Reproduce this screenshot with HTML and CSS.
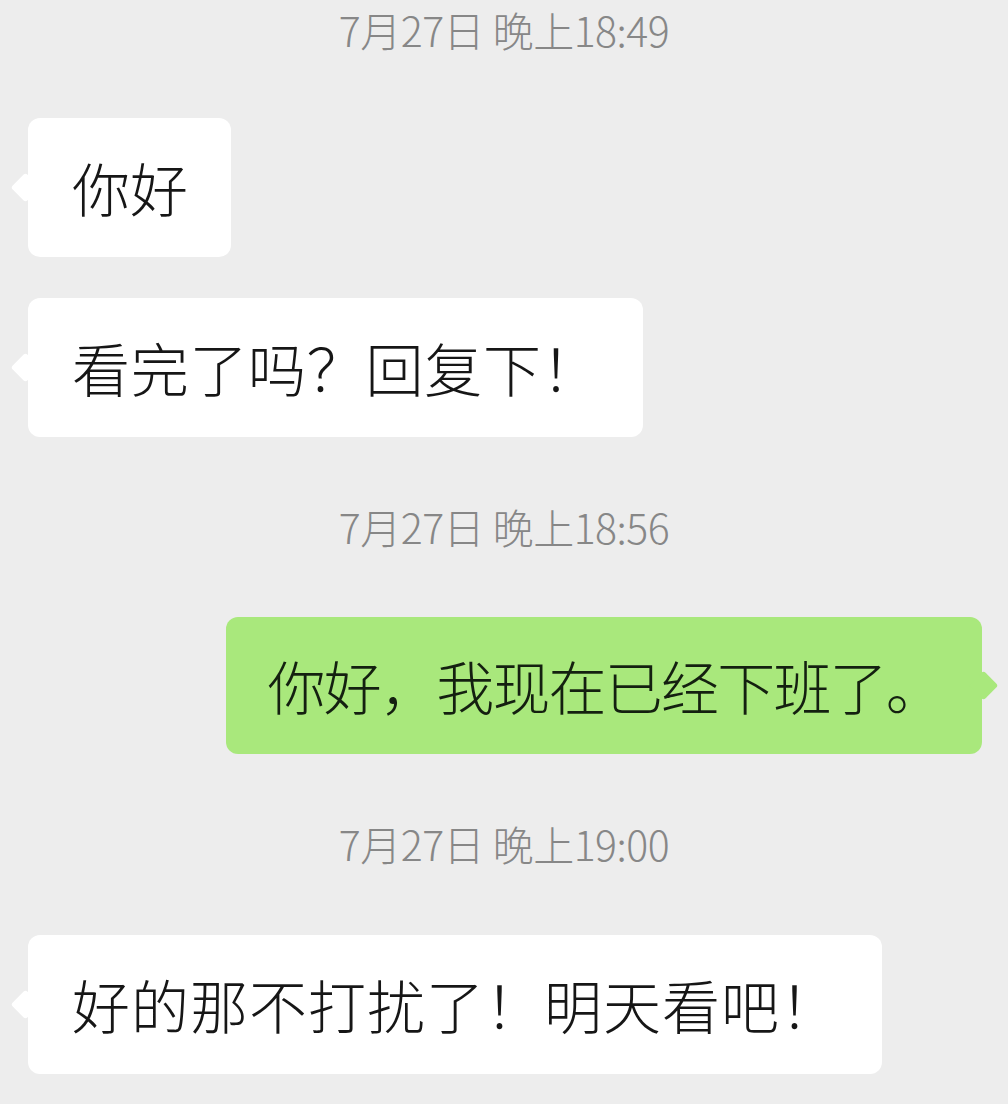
FILE: index.html
```html
<!DOCTYPE html>
<html lang="zh-CN">
<head>
<meta charset="utf-8">
<link rel="stylesheet" href="styles.css">
</head>
<body>
<div class="chat">
  <div class="time t1">7月27日 晚上18:49</div>
  <div class="row left m66"><div class="bubble white">你好</div></div>
  <div class="row left m41"><div class="bubble white wide-a">看完了吗？回复下！</div></div>
  <div class="time m72">7月27日 晚上18:56</div>
  <div class="row right m68"><div class="bubble green">你好，我现在已经下班了。</div></div>
  <div class="time m72">7月27日 晚上19:00</div>
  <div class="row left m69"><div class="bubble white wide-b">好的那不打扰了！明天看吧！</div></div>
</div>
</body>
</html>
```

FILE: styles.css
```css
html, body {
  margin: 0;
  padding: 0;
  background: #ededed;
}
body {
  width: 1008px;
  height: 1104px;
  overflow: hidden;
  font-family: "Noto Sans CJK SC", "Noto Sans", sans-serif;
  font-weight: 300;
}
.chat {
  display: flex;
  flex-direction: column;
  padding-top: 12px;
}
.time {
  height: 34px;
  line-height: 34px;
  padding-bottom: 6px;
  font-size: 41px;
  color: #878787;
  text-align: center;
  letter-spacing: -0.5px;
}
.row {
  display: flex;
}
.row.left {
  justify-content: flex-start;
  padding-left: 28px;
}
.row.right {
  justify-content: flex-end;
  padding-right: 26px;
}
.m66 { margin-top: 66px; }
.m41 { margin-top: 41px; }
.m72 { margin-top: 72px; }
.m68 { margin-top: 68px; }
.m69 { margin-top: 69px; }
.bubble {
  position: relative;
  font-size: 58px;
  line-height: 59px;
  padding: 40px 43px 40px 44px;
  border-radius: 12px;
  color: #161616;
  white-space: nowrap;
}
.white {
  background: #ffffff;
}
.wide-a {
  letter-spacing: 0.7px;
}
.wide-b {
  letter-spacing: 1px;
}
.green {
  background: #a9e87c;
  color: #142010;
  line-height: 57px;
  padding-left: 42px;
  padding-right: 40px;
  letter-spacing: -1.8px;
}
.bubble::before {
  content: "";
  position: absolute;
  top: 50%;
  width: 21px;
  height: 21px;
  margin-top: -10.5px;
  transform: rotate(45deg);
  border-radius: 3px;
  background: inherit;
}
.white::before {
  left: -13px;
}
.green::before {
  right: -12px;
}
```
